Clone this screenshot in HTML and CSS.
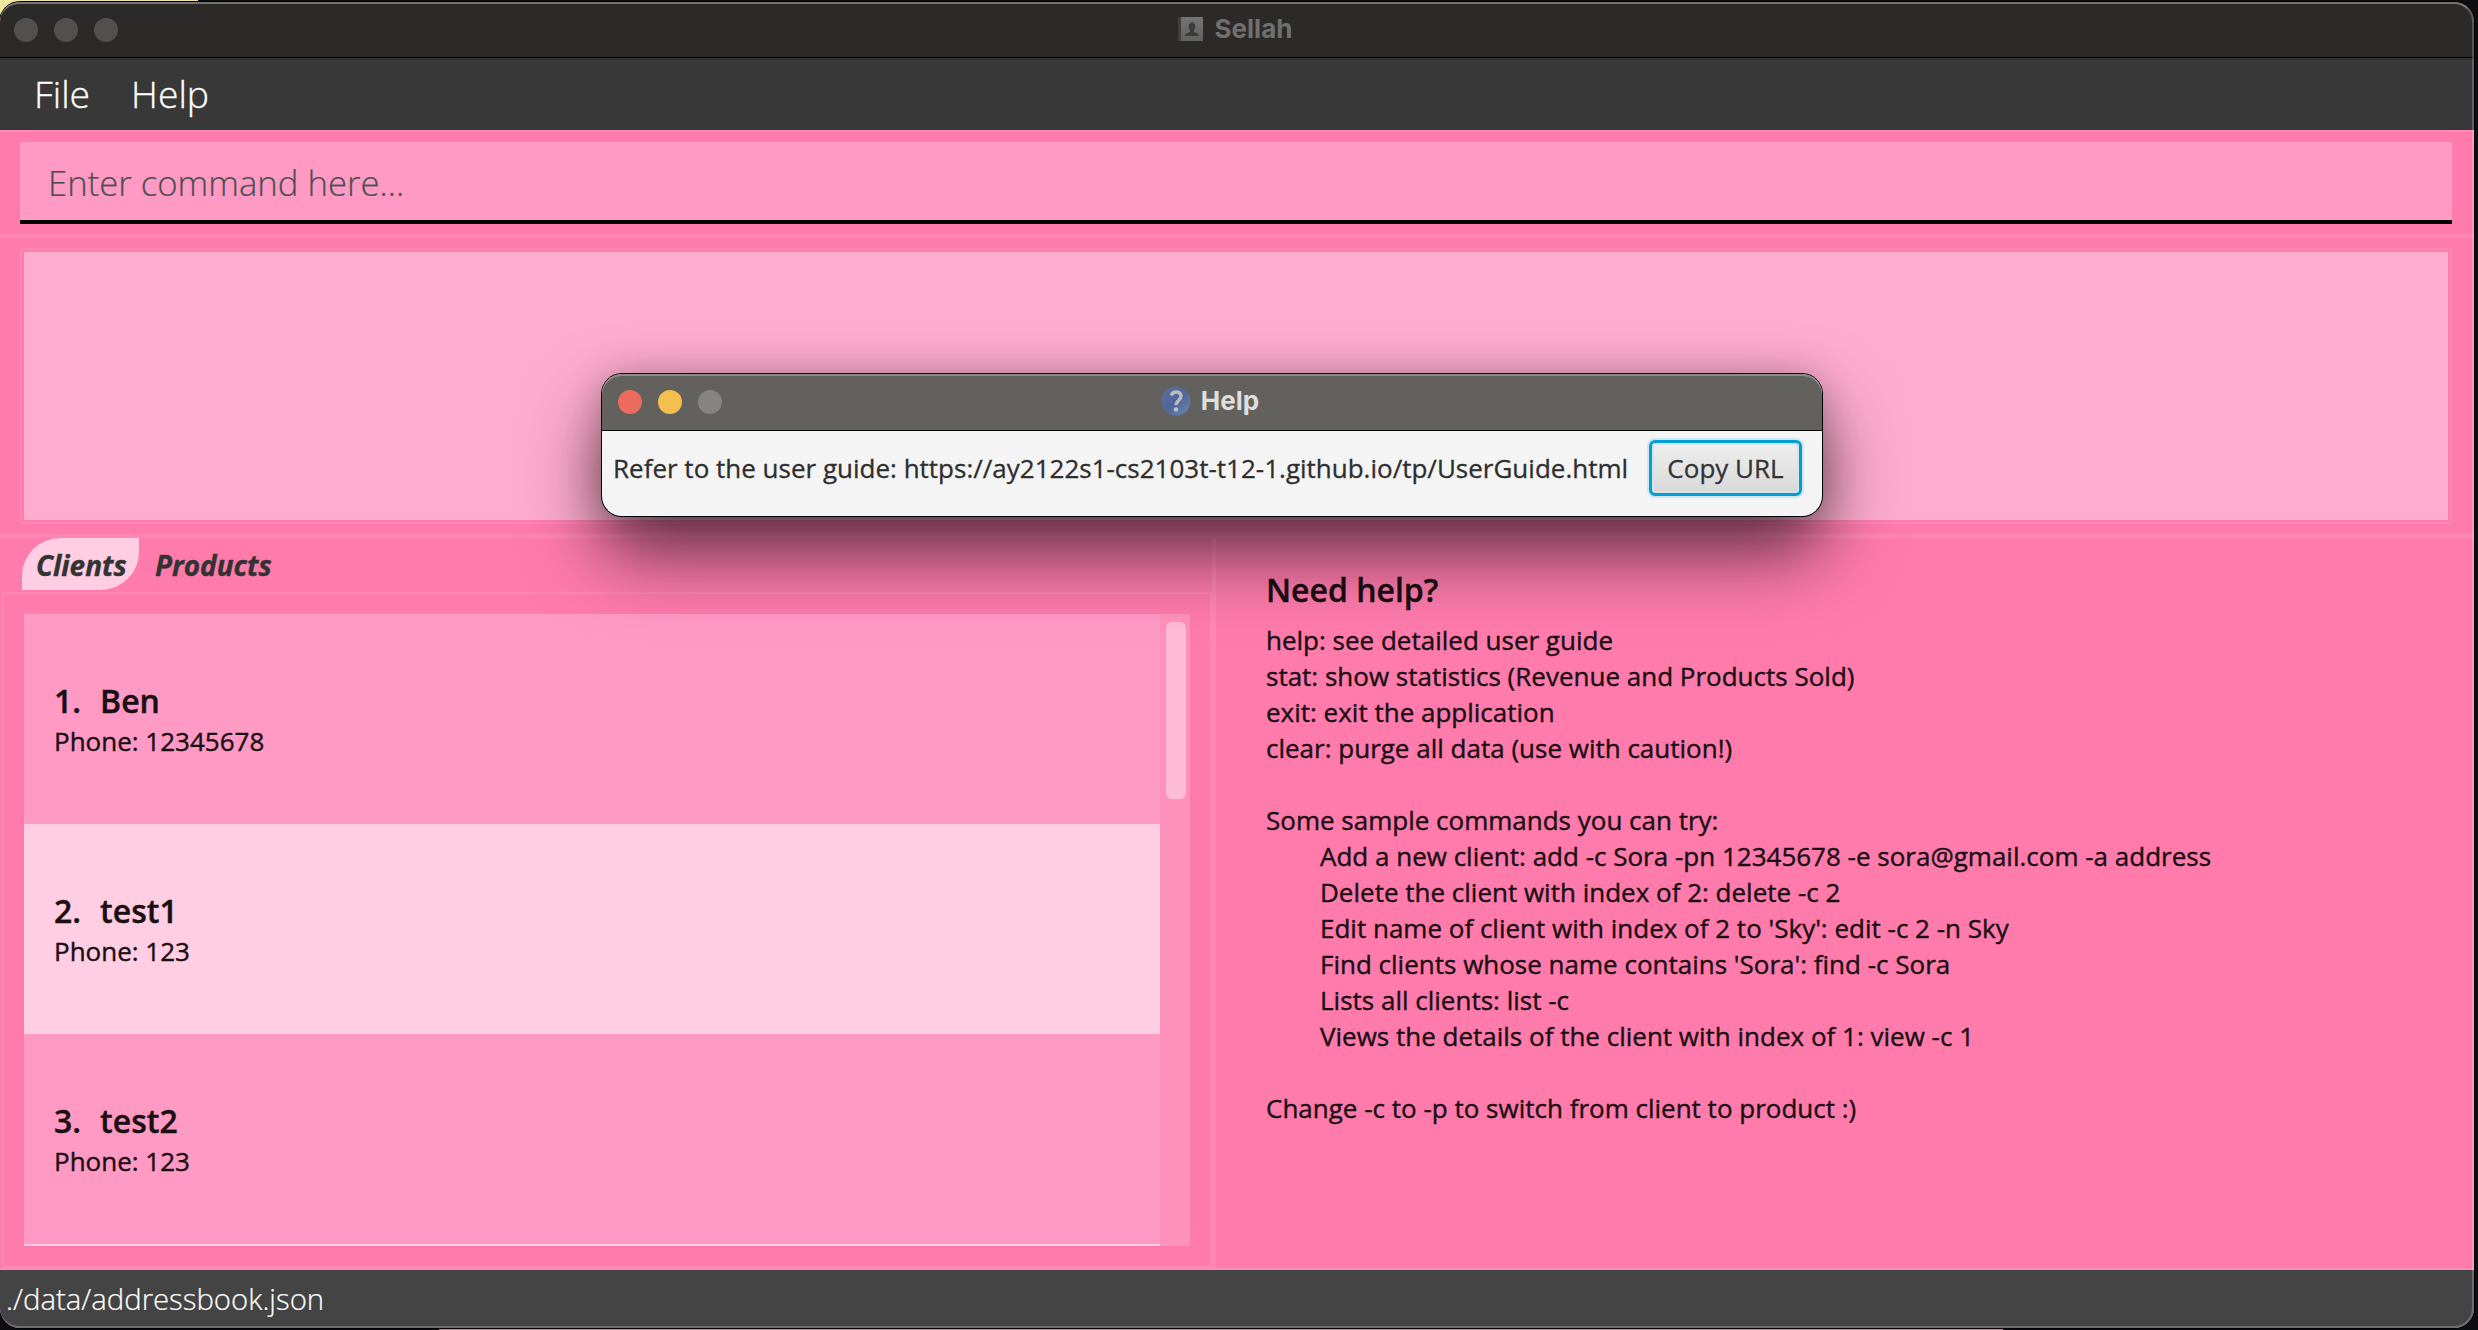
FILE: index.html
```html
<!DOCTYPE html>
<html lang="en">
<head>
<meta charset="utf-8">
<title>Sellah</title>
<link rel="stylesheet" href="styles.css">
</head>
<body>
<div class="desktop-top"></div>
<div class="desktop-bottom"></div>
<main class="window">
  <header class="titlebar">
    <span class="dots"><i></i><i></i><i></i></span>
    <span class="title">
      <svg width="28" height="26" viewBox="0 0 28 26"><defs><linearGradient id="bk" x2="0" y2="1"><stop offset="0" stop-color="#747474"/><stop offset="1" stop-color="#616161"/></linearGradient></defs><rect x="1" y="1" width="4" height="24" fill="#3f3f3e"/><rect x="4" y="1" width="22" height="24" fill="url(#bk)"/><path d="M15 6.500c2.200 0 3.300 1.700 3.300 4 0 1.700-.7 2.800-1.300 3.800v1.200c0 1 5 1.500 5 4.500H8c0-3 5-3.500 5-4.500v-1.200c-.7-1-1.300-2.100-1.300-3.800 0-2.300 1.200-4 3.300-4z" fill="#3c3c3b"/></svg>
      <span>Sellah</span>
    </span>
  </header>
  <nav class="menubar"><span>File</span><span>Help</span></nav>
  <section class="command"><div class="field"><span>Enter command here...</span></div></section>
  <section class="result"><div class="result-frame"><div class="result-box"></div></div></section>
  <section class="split">
    <div class="left">
      <div class="tabs"><span class="tab selected">Clients</span><span class="tab">Products</span></div>
      <div class="list-pane">
        <div class="list">
          <div class="row"><b><span>1.</span><span>Ben</span></b><span>Phone: 12345678</span></div>
          <div class="row alt"><b><span>2.</span><span>test1</span></b><span>Phone: 123</span></div>
          <div class="row"><b><span>3.</span><span>test2</span></b><span>Phone: 123</span></div>
        </div>
        <div class="scroll"><div class="thumb"></div></div>
      </div>
    </div>
    <div class="divider"></div>
    <div class="right">
      <h1>Need help?</h1>
      <p>help: see detailed user guide</p>
      <p>stat: show statistics (Revenue and Products Sold)</p>
      <p>exit: exit the application</p>
      <p>clear: purge all data (use with caution!)</p>
      <p class="gap">Some sample commands you can try:</p>
      <ul>
        <li>Add a new client: add -c Sora -pn 12345678 -e sora@gmail.com -a address</li>
        <li>Delete the client with index of 2: delete -c 2</li>
        <li>Edit name of client with index of 2 to 'Sky': edit -c 2 -n Sky</li>
        <li>Find clients whose name contains 'Sora': find -c Sora</li>
        <li>Lists all clients: list -c</li>
        <li>Views the details of the client with index of 1: view -c 1</li>
      </ul>
      <p class="gap">Change -c to -p to switch from client to product :)</p>
    </div>
  </section>
  <footer class="status"><span>./data/addressbook.json</span></footer>
</main>
<div class="edge"></div>
<div class="dialog">
  <header class="dialog-bar">
    <span class="dots"><i class="red"></i><i class="yellow"></i><i></i></span>
    <span class="title">
      <svg width="30" height="30" viewBox="0 0 30 30"><defs><linearGradient id="q" x1="0" y1="0" x2="1" y2="1"><stop offset="0" stop-color="#62719c"/><stop offset=".5" stop-color="#4f649b"/><stop offset="1" stop-color="#6e8cb0"/></linearGradient></defs><circle cx="15" cy="15" r="14.500" fill="url(#q)"/><path d="M10.300 9.500C12 4.500 20.300 5 20 10.500c-.3 4-5 4-5 8.500" fill="none" stroke="#bdbdbc" stroke-width="3.400"/><circle cx="15" cy="23.500" r="2.300" fill="#bdbdbc"/></svg>
      <span>Help</span>
    </span>
  </header>
  <div class="dialog-body">
    <span class="message">Refer to the user guide: https://ay2122s1-cs2103t-t12-1.github.io/tp/UserGuide.html</span>
    <button class="copy">Copy URL</button>
  </div>
</div>
</body>
</html>
```
FILE: styles.css
```css
* { box-sizing: border-box; }
html, body { height: 100%; }
body { margin: 0; background: #0b0d10; overflow: hidden; position: relative; font-family: "Open Sans", "Noto Sans", sans-serif; font-size: 26px; color: #1a0f13; }
span { white-space: nowrap; }
.desktop-top { position: absolute; left: 0; top: 0; width: 198px; height: 30px; background: #efe7a0; }
.desktop-bottom { position: absolute; left: 439px; bottom: 0; width: 1564px; height: 2px; background: #b08a97; }
.window { position: absolute; left: 0; top: 2px; width: 2474px; height: 1326px; display: flex; flex-direction: column; border-radius: 20px; overflow: hidden; background: #ff7bac; box-shadow: 0 0 0 1px #000; }
.edge { position: absolute; left: 0; top: 2px; width: 2474px; height: 1326px; border-radius: 20px; border: 2px solid rgba(255,255,255,.22); border-left-width: 0; border-top-color: rgba(255,255,240,.35); }

.titlebar { height: 58px; flex: none; background: #2c2a28; border-bottom: 2px solid #303030; box-shadow: inset 0 -1px #000; display: grid; grid-template-columns: 1fr auto 1fr; align-items: center; padding: 0 14px; }
.dots { display: flex; gap: 16px; }
.dots i { width: 24px; height: 24px; border-radius: 50%; background: #51504e; }
.title { display: flex; align-items: center; gap: 10px; margin: 0 2px 3px 0; font: 700 26px Inter, sans-serif; }
.titlebar .title { color: #70706e; margin-right: 5px; }

.menubar { height: 70px; flex: none; background: #383838; color: #fff; display: flex; gap: 41px; padding: 0 34px 4px; align-items: center; font-weight: 300; font-size: 37.3px; -webkit-text-stroke: .3px; }
.command { height: 104px; flex: none; border-top: 2px solid #ff8cb6; padding: 10px 22px 0 20px; }
.field { height: 82px; background: #ff9ac5; border-bottom: 4px solid #000; padding: 2px 28px 0; display: flex; align-items: center; font-weight: 300; font-size: 34.7px; color: #4e4e50; -webkit-text-stroke: .2px; }
.result { height: 304px; flex: none; border-top: 4px solid #ff87b4; border-bottom: 4px solid #ff87b4; padding: 10px 22px 10px 20px; }
.result-frame { height: 276px; border: 2px solid #ff87b4; padding: 2px; }
.result-box { height: 268px; background: #ffadcf; }

.split { flex: 1; min-height: 0; display: flex; border-bottom: 2px solid #ff8cb6; -webkit-text-stroke: .4px; }
.left { width: 1212px; display: flex; flex-direction: column; }
.tabs { height: 54px; display: flex; gap: 2px; padding-left: 22px; align-items: flex-start; }
.tab { height: 52px; line-height: 54px; padding: 0 14px; font-weight: 700; font-style: italic; font-size: 27.900px; color: #333; }
.tab.selected { width: 117px; background: #ffcee2; border-radius: 38px 0 38px 0; }
.list-pane { flex: 1; border: 2px solid #ff87b4; margin-left: 2px; padding: 20px; display: flex; }
.list { width: 1136px; height: 632px; background: #ffcee2; }
.row { height: 210px; background: #ff9ac5; padding: 65px 30px 0; }
.row.alt { background: #ffcee2; }
.row b { display: flex; gap: 19px; font-weight: 600; font-size: 32px; line-height: 44px; }
.row > span { display: block; line-height: 36px; }
.scroll { width: 30px; height: 632px; background: #ff92bb; padding: 8px 4px 0 6px; }
.thumb { height: 177px; border-radius: 6px; background: #ffbcd5; }
.divider { width: 4px; background: #ff87b4; }
.right { flex: 1; padding: 30px 50px; }
.right h1 { margin: 0 0 10px; font-size: 32px; font-weight: 600; line-height: 44px; }
.right p, .right ul { margin: 0; padding: 0; line-height: 36px; }
.right ul { list-style: none; padding-left: 54px; }
.right .gap { margin-top: 36px; }

.status { height: 58px; flex: none; background: #444; color: #fff; padding: 0 6px; font-weight: 300; font-size: 29.3px; line-height: 58px; -webkit-text-stroke: .2px; }

.dialog { position: absolute; left: 602px; top: 374px; width: 1220px; height: 142px; border-radius: 20px; background: #f4f4f4; box-shadow: 0 0 0 1px #000, 0 36px 76px rgba(0,0,0,.64), 0 0 36px rgba(0,0,0,.18); }
.dialog-bar { height: 57px; border-radius: 20px 20px 0 0; background: #62615e; border-bottom: 1px solid #000; box-shadow: inset 0 2px #8d8c8a; display: grid; grid-template-columns: 1fr auto 1fr; align-items: center; padding: 0 16px; }
.dialog .dots i { background: #858482; }
.dialog .dots .red { background: #ed6a5e; }
.dialog .dots .yellow { background: #f5bf4f; }
.dialog .title { color: #dfdedd; margin-right: 4px; }
.dialog-body { display: flex; align-items: center; padding: 9px 20px 0 11px; justify-content: space-between; color: #2e2e2e; -webkit-text-stroke: .3px; }
.copy { width: 153px; height: 56px; margin: 0; padding: 0; font: inherit; color: #333; border: 3px solid #039ed3; border-radius: 6px; background: linear-gradient(#efefef, #d8d8d8); box-shadow: 0 0 0 2px #cfe6ef, inset 0 0 0 2px #d5e2e7; }
```
